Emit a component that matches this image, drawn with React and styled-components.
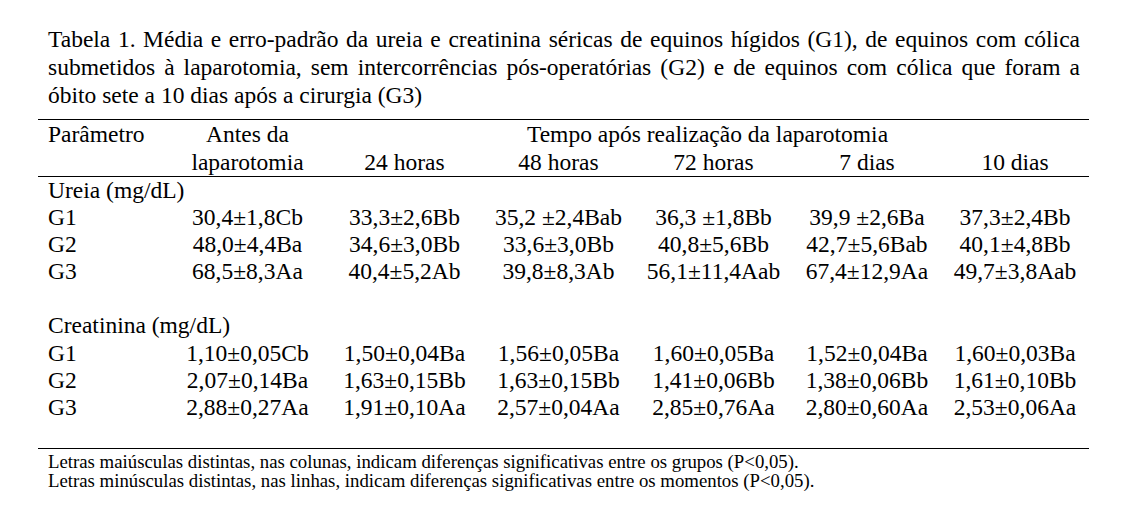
import React from 'react'
import styled, { createGlobalStyle } from 'styled-components'

const GlobalStyle = createGlobalStyle`
  html, body {
    margin: 0;
    padding: 0;
    background: #ffffff;
  }
  body {
    font-family: "Liberation Serif", "Times New Roman", serif;
    color: #000000;
  }
`

const Page = styled.div`
  width: 1144px;
  height: 524px;
  padding-top: 25px;
  box-sizing: border-box;
  background: #ffffff;
  overflow: hidden;
  font-family: "Liberation Serif", "Times New Roman", serif;
`

const Caption = styled.div`
  margin-left: 48px;
  width: 1032px;
  font-size: 23.5px;
  line-height: 28px;
`

const CaptionLine = styled.div`
  white-space: nowrap;
  text-align: left;
  text-align-last: ${p => (p.$last ? 'left' : 'justify')};
`

const Table = styled.table`
  margin-top: 10px;
  margin-left: 38px;
  width: 1051px;
  table-layout: fixed;
  border-collapse: separate;
  border-spacing: 0;
  border-top: 1px solid #000;
  border-bottom: 1px solid #000;
  font-family: "Liberation Serif", "Times New Roman", serif;
  font-size: 23.5px;
  color: #000;
`

const HeadCell = styled.th`
  padding: 0;
  font-weight: normal;
  line-height: 28px;
  vertical-align: top;
  text-align: ${p => (p.$left ? 'left' : 'center')};
  padding-left: ${p => (p.$left ? '10px' : '0')};
  border-bottom: ${p => (p.$rule ? '1px solid #000' : 'none')};
  white-space: nowrap;
`

const Cell = styled.td`
  padding: 0;
  height: 27.1px;
  line-height: 27.1px;
  text-align: ${p => (p.$left ? 'left' : 'center')};
  padding-left: ${p => (p.$left ? '10px' : '0')};
  white-space: nowrap;
`

const Notes = styled.div`
  margin-top: 3px;
  margin-left: 48px;
  font-size: 18.8px;
  line-height: 19px;
  white-space: nowrap;
`

const widths = [131, 157, 157, 151, 159, 148, 148]

const ureia = [
  ['G1', '30,4±1,8Cb', '33,3±2,6Bb', '35,2 ±2,4Bab', '36,3 ±1,8Bb', '39,9 ±2,6Ba', '37,3±2,4Bb'],
  ['G2', '48,0±4,4Ba', '34,6±3,0Bb', '33,6±3,0Bb', '40,8±5,6Bb', '42,7±5,6Bab', '40,1±4,8Bb'],
  ['G3', '68,5±8,3Aa', '40,4±5,2Ab', '39,8±8,3Ab', '56,1±11,4Aab', '67,4±12,9Aa', '49,7±3,8Aab'],
]

const creatinina = [
  ['G1', '1,10±0,05Cb', '1,50±0,04Ba', '1,56±0,05Ba', '1,60±0,05Ba', '1,52±0,04Ba', '1,60±0,03Ba'],
  ['G2', '2,07±0,14Ba', '1,63±0,15Bb', '1,63±0,15Bb', '1,41±0,06Bb', '1,38±0,06Bb', '1,61±0,10Bb'],
  ['G3', '2,88±0,27Aa', '1,91±0,10Aa', '2,57±0,04Aa', '2,85±0,76Aa', '2,80±0,60Aa', '2,53±0,06Aa'],
]

function LabelRow({ label }) {
  return (
    <tr>
      <Cell $left colSpan={7}>{label}</Cell>
    </tr>
  )
}

function BlankRow() {
  return (
    <tr>
      <Cell colSpan={7}>&nbsp;</Cell>
    </tr>
  )
}

function DataRow({ values }) {
  return (
    <tr>
      {values.map((v, i) => (
        <Cell key={i} $left={i === 0}>{v}</Cell>
      ))}
    </tr>
  )
}

export default function App() {
  return (
    <Page>
      <GlobalStyle />
      <Caption>
        <CaptionLine>
          Tabela 1. Média e erro-padrão da ureia e creatinina séricas de equinos hígidos (G1), de equinos com cólica
        </CaptionLine>
        <CaptionLine>
          submetidos à laparotomia, sem intercorrências pós-operatórias (G2) e de equinos com cólica que foram a
        </CaptionLine>
        <CaptionLine $last>óbito sete a 10 dias após a cirurgia (G3)</CaptionLine>
      </Caption>

      <Table>
        <colgroup>
          {widths.map((w, i) => (
            <col key={i} style={{ width: w }} />
          ))}
        </colgroup>
        <thead>
          <tr>
            <HeadCell $left $rule rowSpan={2}>Parâmetro</HeadCell>
            <HeadCell $rule rowSpan={2}>
              Antes da
              <br />
              laparotomia
            </HeadCell>
            <HeadCell colSpan={5}>Tempo após realização da laparotomia</HeadCell>
          </tr>
          <tr>
            <HeadCell $rule>24 horas</HeadCell>
            <HeadCell $rule>48 horas</HeadCell>
            <HeadCell $rule>72 horas</HeadCell>
            <HeadCell $rule>7 dias</HeadCell>
            <HeadCell $rule>10 dias</HeadCell>
          </tr>
        </thead>
        <tbody>
          <LabelRow label="Ureia (mg/dL)" />
          {ureia.map(r => <DataRow key={'u' + r[0]} values={r} />)}
          <BlankRow />
          <LabelRow label="Creatinina (mg/dL)" />
          {creatinina.map(r => <DataRow key={'c' + r[0]} values={r} />)}
          <BlankRow />
        </tbody>
      </Table>

      <Notes>
        <div>Letras maiúsculas distintas, nas colunas, indicam diferenças significativas entre os grupos (P&lt;0,05).</div>
        <div>Letras minúsculas distintas, nas linhas, indicam diferenças significativas entre os momentos (P&lt;0,05).</div>
      </Notes>
    </Page>
  )
}
